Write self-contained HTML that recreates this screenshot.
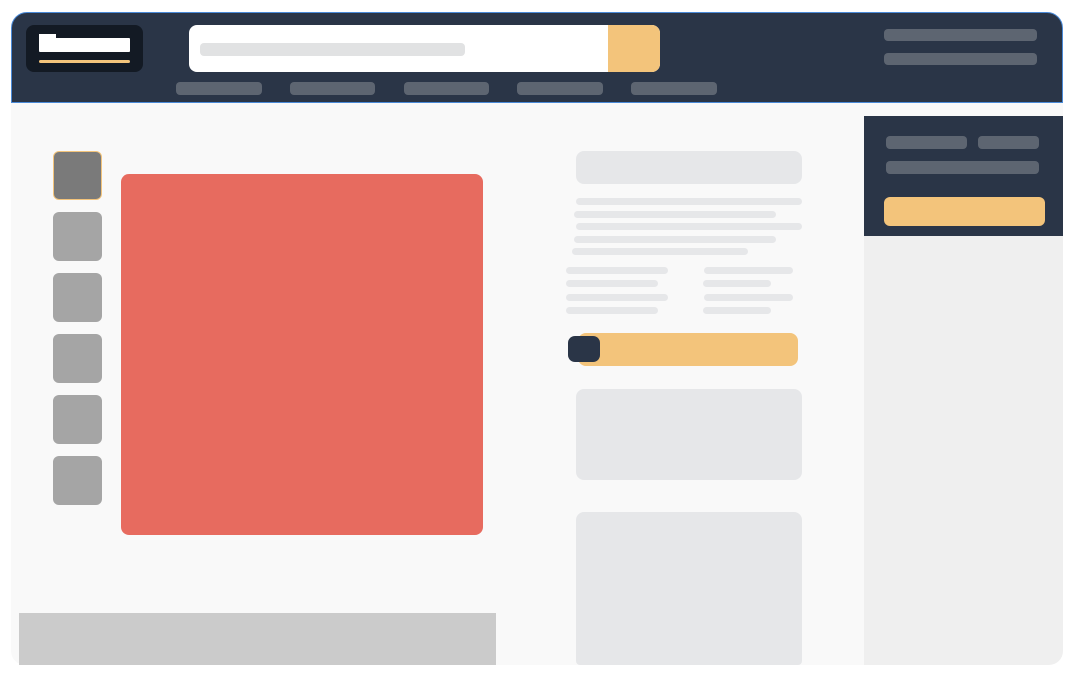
<!DOCTYPE html>
<html><head><style>
*{margin:0;padding:0;box-sizing:border-box}
body{width:1073px;height:673px;background:#fff;position:relative;overflow:hidden;font-family:"Liberation Sans",sans-serif}
div{position:absolute}
.p{background:#5d6571;border-radius:4px}
.l{background:#e6e7e9;border-radius:4px;height:7px}
.t{background:#a5a5a5;border-radius:6px;left:53px;width:49px;height:49px}
</style></head><body>
<div style="left:11px;top:12px;width:1052px;height:653px;background:#f9f9f9;border-radius:16px 16px 14px 14px;overflow:hidden">
</div>
<div style="left:11px;top:12px;width:1052px;height:91px;background:#2a3547;border-radius:16px 16px 0 0;border-top:1px solid #4a8ad8;border-left:1px solid #4a8ad8;border-right:1px solid #4a8ad8;border-bottom:1px solid #4a8ad8"></div>
<div style="left:26px;top:25px;width:117px;height:47px;background:#131a24;border-radius:8px"></div>
<div style="left:39px;top:34px;width:17px;height:6px;background:#fff"></div>
<div style="left:39px;top:38px;width:91px;height:14px;background:#fff;border-radius:1px"></div>
<div style="left:39px;top:60px;width:91px;height:3px;background:#f3c47b;border-radius:2px"></div>
<div style="left:189px;top:25px;width:471px;height:47px;background:#fff;border-radius:8px;overflow:hidden"><div style="left:419px;top:0;width:52px;height:47px;background:#f3c47b"></div></div>
<div style="left:200px;top:43px;width:265px;height:13px;background:#e1e2e3;border-radius:4px"></div>
<div class="p" style="left:176px;top:82px;width:86px;height:13px"></div>
<div class="p" style="left:290px;top:82px;width:85px;height:13px"></div>
<div class="p" style="left:404px;top:82px;width:85px;height:13px"></div>
<div class="p" style="left:517px;top:82px;width:86px;height:13px"></div>
<div class="p" style="left:631px;top:82px;width:86px;height:13px"></div>
<div class="p" style="left:884px;top:29px;width:153px;height:12px"></div>
<div class="p" style="left:884px;top:53px;width:153px;height:12px"></div>

<div class="t" style="top:151px;background:#7a7a7a;border:1px solid #f3c47b"></div>
<div class="t" style="top:212px"></div>
<div class="t" style="top:273px"></div>
<div class="t" style="top:334px"></div>
<div class="t" style="top:395px"></div>
<div class="t" style="top:456px"></div>
<div style="left:121px;top:174px;width:362px;height:361px;background:#e76b5f;border-radius:8px"></div>
<div style="left:19px;top:613px;width:477px;height:52px;background:#cbcbcb"></div>

<div style="left:576px;top:151px;width:226px;height:33px;background:#e6e7e9;border-radius:8px"></div>
<div class="l" style="left:576px;top:198px;width:226px"></div>
<div class="l" style="left:574px;top:211px;width:202px"></div>
<div class="l" style="left:576px;top:223px;width:226px"></div>
<div class="l" style="left:574px;top:236px;width:202px"></div>
<div class="l" style="left:572px;top:248px;width:176px"></div>
<div class="l" style="left:566px;top:267px;width:102px"></div>
<div class="l" style="left:704px;top:267px;width:89px"></div>
<div class="l" style="left:566px;top:280px;width:92px"></div>
<div class="l" style="left:703px;top:280px;width:68px"></div>
<div class="l" style="left:566px;top:294px;width:102px"></div>
<div class="l" style="left:704px;top:294px;width:89px"></div>
<div class="l" style="left:566px;top:307px;width:92px"></div>
<div class="l" style="left:703px;top:307px;width:68px"></div>
<div style="left:578px;top:333px;width:220px;height:33px;background:#f3c47b;border-radius:8px"></div>
<div style="left:568px;top:336px;width:32px;height:26px;background:#2a3547;border-radius:7px"></div>
<div style="left:576px;top:389px;width:226px;height:91px;background:#e6e7e9;border-radius:8px"></div>
<div style="left:576px;top:512px;width:226px;height:153px;background:#e6e7e9;border-radius:8px 8px 4px 4px"></div>

<div style="left:864px;top:116px;width:199px;height:549px;background:#efefef;border-radius:0 0 14px 0"></div>
<div style="left:864px;top:116px;width:199px;height:120px;background:#2a3547"></div>
<div class="p" style="left:886px;top:136px;width:81px;height:13px"></div>
<div class="p" style="left:978px;top:136px;width:61px;height:13px"></div>
<div class="p" style="left:886px;top:161px;width:153px;height:13px"></div>
<div style="left:884px;top:197px;width:161px;height:29px;background:#f3c47b;border-radius:6px"></div>
</body></html>
